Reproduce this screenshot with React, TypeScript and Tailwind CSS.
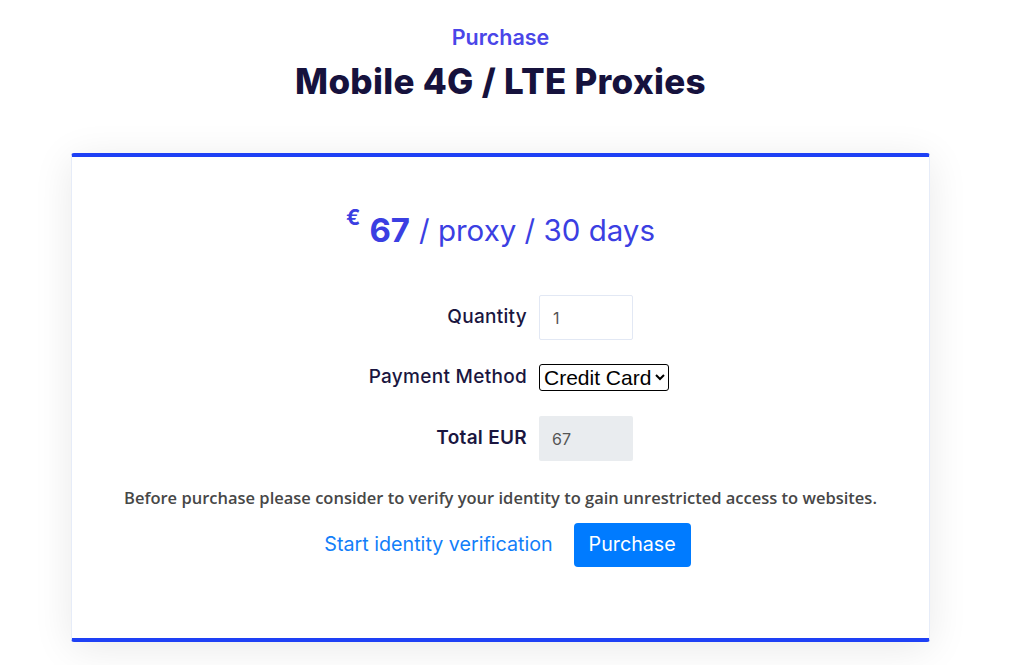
import React from "react";

export default function App() {
  const head = { fontFamily: "Inter, 'Noto Sans', sans-serif" };
  const label = "w-[455px] text-right text-[19px] tracking-[0.3px] text-[#1a1640]";
  return (
    <div className="min-h-[665px] bg-white">
      <div className="w-[1001px] flex flex-col items-center" style={head}>
        <div className="pt-[24px] text-[21.5px] leading-[26px] font-semibold text-[#4a46e8]">Purchase</div>
        <h1 className="mt-[11px] text-[35px] leading-[40px] font-extrabold text-[#16123d] tracking-[0.3px]">
          Mobile 4G / LTE Proxies
        </h1>
        <div className="mt-[52px] w-[859px] bg-white border-t-4 border-b-4 border-t-[#1e40f5] border-b-[#1e40f5] border-x border-x-[#e6ecf8] rounded-[3px] shadow-[0_6px_40px_rgba(0,0,0,0.09)] h-[489px] flex flex-col items-center">
          <div className="mt-[47px] flex items-start text-[#3b3fe2]">
            <span className="text-[21px] font-bold leading-[20px] mt-[4px]">€</span>
            <span className="ml-[9px] text-[33px] font-bold leading-[52px]">67</span>
            <span className="ml-[9px] text-[29.5px] font-normal leading-[52px]">/ proxy / 30 days</span>
          </div>
          <div className="mt-[39px] w-full flex flex-col">
            <div className="flex items-center h-[45px]">
              <div className={label + " font-medium"}>Quantity</div>
              <input
                readOnly
                value="1"
                className="ml-[12px] w-[94px] h-[45px] border border-[#e2e8f4] rounded-[2px] px-[13px] text-[16px] text-[#555] outline-none"
              />
            </div>
            <div className="flex items-center h-[27px] mt-[24px]">
              <div className={label + " font-medium"}>Payment Method</div>
              <select
                defaultValue="cc"
                className="ml-[12px] h-[27px] border-[1.5px] border-black rounded-[3px] text-[21px] leading-[24px] text-black bg-white"
                style={{ fontFamily: "'Liberation Sans', Arial, sans-serif", appearance: "auto" }}
              >
                <option value="cc">Credit Card</option>
              </select>
            </div>
            <div className="flex items-center h-[45px] mt-[25px]">
              <div className={label + " font-semibold"}>Total EUR</div>
              <div className="ml-[12px] w-[94px] h-[45px] bg-[#e9ecef] rounded-[2px] px-[13px] flex items-center text-[16px] text-[#555]">
                67
              </div>
            </div>
          </div>
          <p
            className="mt-[26px] text-[16.5px] font-semibold text-[#474747] leading-[22px]"
            style={{ fontFamily: "'Open Sans', sans-serif" }}
          >
            Before purchase please consider to verify your identity to gain unrestricted access to websites.
          </p>
          <div className="mt-[14px] ml-[14px] flex items-center">
            <a className="text-[19.7px] text-[#127ef9] cursor-pointer">Start identity verification</a>
            <button className="ml-[21px] h-[44px] w-[117px] bg-[#007bff] text-white text-[19.7px] rounded-[4px]">
              Purchase
            </button>
          </div>
        </div>
      </div>
    </div>
  );
}
